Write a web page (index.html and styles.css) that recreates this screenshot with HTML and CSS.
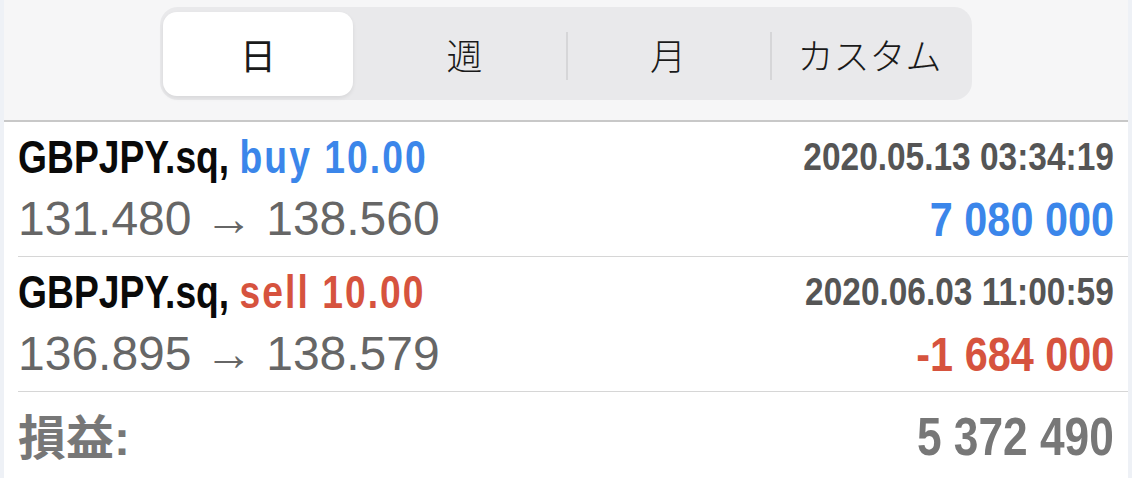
FILE: index.html
```html
<!DOCTYPE html>
<html lang="ja">

<head>
    <meta charset="UTF-8">
    <meta name="viewport" content="width=device-width, initial-scale=1.0">
    <link rel="stylesheet" href="styles.css">
    <title>履歴</title>
</head>

<body>
    <div class="page">
        <header class="top">
            <div class="segments">
                <div class="seg active">日</div>
                <div class="seg week">週</div>
                <div class="seg month sep">月</div>
                <div class="seg custom sep">カスタム</div>
            </div>
        </header>

        <div class="deal">
            <div class="col">
                <div class="title">GBPJPY.sq, <span class="buy">buy 10.00</span></div>
                <div class="price">131.480 → 138.560</div>
            </div>
            <div class="col right">
                <div class="time">2020.05.13 03:34:19</div>
                <div class="profit buy">7 080 000</div>
            </div>
        </div>

        <div class="deal">
            <div class="col">
                <div class="title">GBPJPY.sq, <span class="sell">sell 10.00</span></div>
                <div class="price">136.895 → 138.579</div>
            </div>
            <div class="col right">
                <div class="time">2020.06.03 11:00:59</div>
                <div class="profit sell">-1 684 000</div>
            </div>
        </div>

        <div class="total">
            <span class="label">損益:</span>
            <span class="sum">5 372 490</span>
        </div>
    </div>
</body>

</html>
```

FILE: styles.css
```css
* {
    margin: 0;
    padding: 0;
    box-sizing: border-box;
}

body {
    background-color: #eef1f6;
    font-family: 'Liberation Sans', sans-serif;
    overflow: hidden;
}

.page {
    margin: 0 4px;
    height: 478px;
    background-color: #fff;
}

/* segmented control */

.top {
    height: 122px;
    background-color: #f6f6f7;
    border-bottom: 2px solid #c8c8c8;
    padding-top: 7px;
    display: flex;
    justify-content: center;
}

.segments {
    width: 812px;
    height: 93px;
    padding: 5px 3px 4px;
    background-color: #e9e9eb;
    border-radius: 18px;
    display: flex;
}

.seg {
    display: flex;
    justify-content: center;
    align-items: center;
    font-family: 'Noto Sans CJK JP', sans-serif;
    font-weight: 300;
    font-size: 36px;
    color: #1a1a1a;
    position: relative;
}

.seg.active {
    width: 190px;
    margin-right: 10px;
    background-color: #fff;
    border-radius: 14px;
    box-shadow: 0 2px 4px rgba(0, 0, 0, 0.08);
    font-weight: 400;
}

.seg.week {
    width: 203px;
}

.seg.month {
    width: 204px;
}

.seg.custom {
    flex: 1;
}

.seg.sep::before {
    content: '';
    position: absolute;
    left: 0;
    top: 20px;
    bottom: 16px;
    width: 2px;
    background-color: #d6d6d8;
}

/* deals */

.deal {
    display: flex;
    justify-content: space-between;
    margin-left: 14px;
    padding: 4px 14px 6px 0;
    border-bottom: 1px solid #d6d6d6;
}

.col {
    display: flex;
    flex-direction: column;
    align-items: flex-start;
}

.col.right {
    align-items: flex-end;
}

.title,
.price,
.time,
.profit {
    height: 62px;
    line-height: 62px;
    white-space: nowrap;
}

.title {
    font-weight: bold;
    font-size: 46px;
    color: #0a0a0a;
    transform: scaleX(0.81);
    transform-origin: left center;
}

.title span {
    letter-spacing: 2.5px;
}

.price {
    font-size: 48px;
    color: #666;
}

.time {
    font-weight: bold;
    font-size: 38px;
    color: #555;
    transform: scaleX(0.88);
    transform-origin: right center;
}

.profit {
    font-weight: bold;
    font-size: 49px;
    transform: scaleX(0.845);
    transform-origin: right center;
}

.buy {
    color: #3b86ea;
}

.sell {
    color: #d6533e;
}

/* total */

.total {
    display: flex;
    justify-content: space-between;
    align-items: baseline;
    margin-left: 14px;
    padding: 10px 14px 0 0;
    line-height: 70px;
    color: #777;
    font-weight: bold;
    font-family: 'Liberation Sans', 'Noto Sans CJK JP', sans-serif;
}

.label {
    font-size: 48px;
}

.sum {
    display: inline-block;
    font-size: 53px;
    transform: scaleX(0.835);
    transform-origin: right center;
}
```
